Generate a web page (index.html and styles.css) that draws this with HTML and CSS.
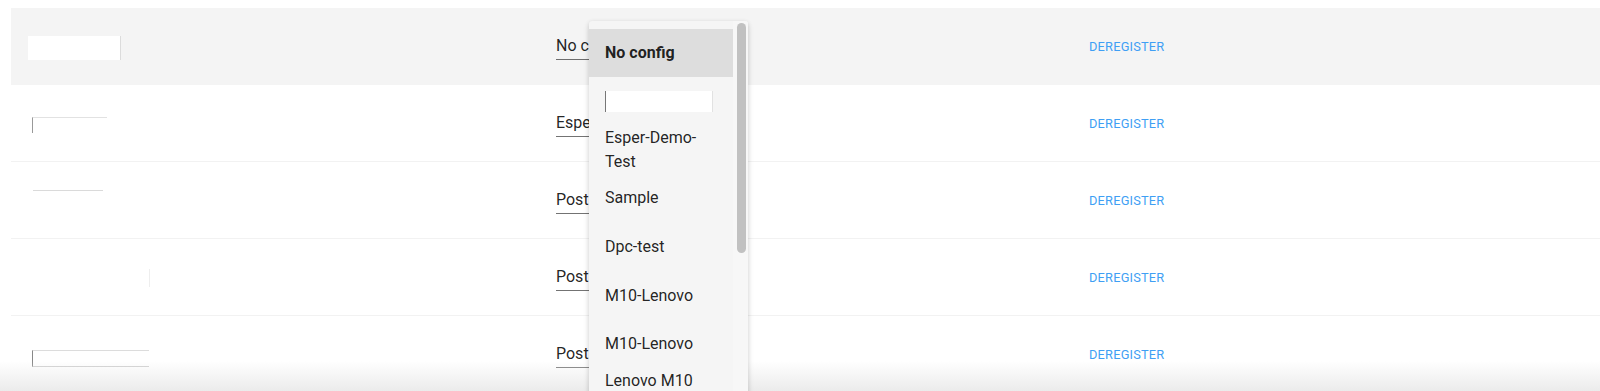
FILE: index.html
```html
<!DOCTYPE html>
<html lang="en">
<head>
    <meta charset="UTF-8">
    <meta name="viewport" content="width=device-width, initial-scale=1.0">
    <title>Devices</title>
    <link rel="stylesheet" href="styles.css">
</head>
<body>

<div class="table">
    <div class="row active">
        <div class="cell"><div class="mask mask-one"></div></div>
        <div class="cell"><div class="select">No config</div></div>
        <div class="cell"><a class="dereg" href="#">DEREGISTER</a></div>
    </div>
    <div class="row">
        <div class="cell"><div class="mask mask-two"></div></div>
        <div class="cell"><div class="select">Esper-Demo-Test</div></div>
        <div class="cell"><a class="dereg" href="#">DEREGISTER</a></div>
    </div>
    <div class="row">
        <div class="cell"><div class="mask mask-three"></div></div>
        <div class="cell"><div class="select">Postman</div></div>
        <div class="cell"><a class="dereg" href="#">DEREGISTER</a></div>
    </div>
    <div class="row">
        <div class="cell"><div class="mask mask-four"></div></div>
        <div class="cell"><div class="select">Postman</div></div>
        <div class="cell"><a class="dereg" href="#">DEREGISTER</a></div>
    </div>
    <div class="row">
        <div class="cell"><div class="mask mask-five"></div></div>
        <div class="cell"><div class="select">Postman</div></div>
        <div class="cell"><a class="dereg" href="#">DEREGISTER</a></div>
    </div>
</div>

<div class="fade"></div>

<!-- open config menu -->
<div class="menu">
    <ul class="list">
        <li class="item selected">No config</li>
        <li class="item"><span class="hidden-name"></span></li>
        <li class="item">Esper-Demo-Test</li>
        <li class="item">Sample</li>
        <li class="item">Dpc-test</li>
        <li class="item">M10-Lenovo</li>
        <li class="item">M10-Lenovo</li>
        <li class="item">Lenovo M10 Config</li>
    </ul>
    <div class="track">
        <div class="thumb"></div>
    </div>
</div>

</body>
</html>
```

FILE: styles.css
```css
body{
    margin: 0;
    background-color: white;
    font-family: Roboto, "Liberation Sans", sans-serif;
    color: rgba(0, 0, 0, 0.87);
    height: 391px;
    overflow: hidden;
}

.table{
    margin: 8px 0 0 11px;
}
.row{
    display: grid;
    grid-template-columns: 528px 533px 1fr;
    align-items: center;
    height: 76px;
    padding-left: 17px;
    border-bottom: 1px solid #f2f2f2;
}
.row.active{
    background-color: #f4f4f4;
    border-bottom-color: #f4f4f4;
}
.cell{
    display: flex;
    align-items: center;
}

.select{
    width: 170px;
    font-size: 16px;
    line-height: 19px;
    padding: 5px 0 4px;
    border-bottom: 1px solid rgba(0, 0, 0, 0.55);
    white-space: nowrap;
    overflow: hidden;
    margin-top: -1px;
}

.dereg{
    font-size: 12.8px;
    font-weight: 400;
    letter-spacing: 0.2px;
    color: #3f9ff4;
    text-decoration: none;
}

/* blanked out device names */
.mask{
    background-color: white;
}
.mask-one{
    width: 92px;
    height: 24px;
    border-right: 1px solid #dcdcdc;
    margin-top: 3px;
}
.mask-two{
    width: 74px;
    height: 15px;
    margin-left: 4px;
    border-left: 1px solid #999;
    border-top: 1px solid #e2e2e2;
    margin-top: 3px;
}
.mask-three{
    width: 70px;
    height: 1px;
    margin-left: 5px;
    background-color: #dadada;
    margin-top: -20px;
}
.mask-four{
    width: 1px;
    height: 18px;
    margin-left: 121px;
    background-color: #eeeeee;
    margin-top: 2px;
}
.mask-five{
    width: 116px;
    height: 15px;
    margin-left: 4px;
    border-left: 1px solid #888;
    border-top: 1px solid #dcdcdc;
    border-bottom: 1px solid #cfcfcf;
    margin-top: 8px;
}

.fade{
    position: absolute;
    left: 0;
    right: 0;
    bottom: 0;
    height: 30px;
    background: linear-gradient(rgba(235, 235, 235, 0), #ebebeb);
}

.menu{
    position: absolute;
    left: 589px;
    top: 21px;
    width: 159px;
    height: 380px;
    display: flex;
    background-color: #f5f5f5;
    box-shadow: 0 3px 6px rgba(0, 0, 0, 0.12), 0 1px 4px rgba(0, 0, 0, 0.1);
    border-radius: 3px 3px 0 0;
    overflow: hidden;
}
.list{
    list-style: none;
    margin: 0;
    padding: 8px 0 0;
    width: 144px;
}
.item{
    display: flex;
    align-items: center;
    min-height: 48px;
    padding: 0 16px;
    font-size: 16px;
    line-height: 24px;
    box-sizing: border-box;
}
.item + .item{
    min-height: 48.6px;
}
.item.selected{
    background-color: #dddddd;
    font-weight: 700;
}
.hidden-name{
    display: block;
    width: 106px;
    height: 21px;
    background-color: white;
    border-right: 1px solid #e2e2e2;
    border-left: 1px solid #777;
}
.track{
    width: 15px;
    padding: 2px 2px 0 4px;
    box-sizing: border-box;
    background-color: #f7f7f7;
}
.thumb{
    width: 9px;
    height: 230px;
    border-radius: 5px;
    background-color: #c1c1c1;
}
```
